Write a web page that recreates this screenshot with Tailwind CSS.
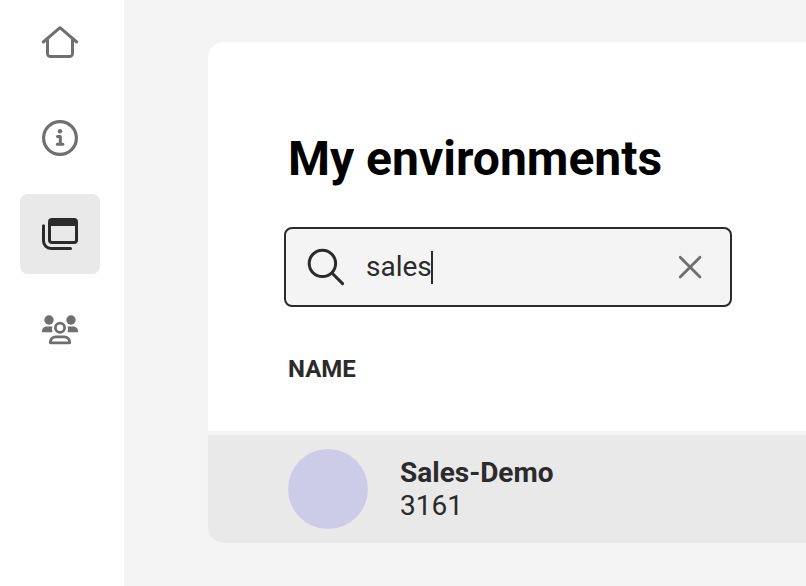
<!DOCTYPE html>
<html lang="en">
<head>
<meta charset="utf-8">
<title>My environments</title>
<script src="https://cdn.jsdelivr.net/npm/@tailwindcss/browser@4"></script>
</head>
<body class="flex h-screen w-screen overflow-hidden bg-[#f4f4f4] font-['Roboto',sans-serif] text-[#2b2b2b]">
  <nav class="flex w-[124px] shrink-0 flex-col items-start gap-4 bg-white pt-0.5 pl-5 text-[#6f6f6f]">
    <a class="flex size-20 items-center justify-center rounded-lg" aria-label="Home">
      <svg class="size-10" viewBox="0 0 40 40" fill="none" stroke="currentColor" stroke-width="3" stroke-linecap="round" stroke-linejoin="round"><path d="M3.3 20 20 5.7 36.7 20"/><path d="M7.5 17.5V31.5a3 3 0 0 0 3 3h19a3 3 0 0 0 3-3V17.5"/></svg>
    </a>
    <a class="flex size-20 items-center justify-center rounded-lg" aria-label="Information">
      <svg class="size-10" viewBox="0 0 40 40" fill="none" stroke="currentColor" stroke-width="3.2" stroke-linecap="round" stroke-linejoin="round"><circle cx="20" cy="20" r="16.4"/><circle cx="20" cy="13.2" r="2.2" fill="currentColor" stroke="none"/><path d="M17.5 18.6h2.8v7.2M17.3 26.2h5.6" stroke-width="3"/></svg>
    </a>
    <a class="flex size-20 items-center justify-center rounded-lg bg-[#e9e9e9] text-[#2b2b2b]" aria-label="Environments">
      <svg class="size-10" viewBox="0 0 40 40" fill="none" stroke="currentColor" stroke-width="3" stroke-linecap="round" stroke-linejoin="round"><rect x="9.5" y="5.4" width="27" height="23" rx="2.5"/><path d="M9.5 8.5a3 3 0 0 1 3-3h21a3 3 0 0 1 3 3V12h-27z" fill="currentColor" stroke="none"/><path d="M3.5 11.7V27a7.5 7.5 0 0 0 7.5 7.5h19.5"/></svg>
    </a>
    <a class="flex size-20 items-center justify-center rounded-lg" aria-label="People">
      <svg class="size-10" viewBox="0 0 40 40" fill="currentColor"><circle cx="9" cy="10" r="4.7"/><circle cx="31" cy="10" r="4.7"/><path d="M2 22.3v-1.2a4.7 4.7 0 0 1 4.7-4.7h5.7a8 8 0 0 0 .1 5.9zM38 22.3v-1.2a4.7 4.7 0 0 0-4.7-4.7h-5.7a8 8 0 0 1-.1 5.9z"/><circle cx="20" cy="17.8" r="4.6" fill="none" stroke="currentColor" stroke-width="2.8"/><path d="M10.3 32.8c0-3.4 2.2-6 5.5-6h8.4c3.3 0 5.5 2.6 5.5 6z" fill="none" stroke="currentColor" stroke-width="2.8" stroke-linejoin="round"/></svg>
    </a>
  </nav>
  <main class="flex-1 pt-[42px] pl-[84px]">
    <section class="overflow-hidden rounded-l-2xl bg-white">
      <div class="flex h-[389px] flex-col items-start pl-20">
        <h1 class="mt-[89px] text-[48px] leading-[56px] font-bold whitespace-nowrap text-black">My environments</h1>
        <div class="mt-10 -ml-1 flex h-20 w-[448px] items-center rounded-lg border-2 border-[#2b2b2b] bg-[#f4f4f4] pr-5 pl-5">
          <svg class="size-10 shrink-0" viewBox="0 0 40 40" fill="none" stroke="currentColor" stroke-width="3" stroke-linecap="round"><circle cx="16.4" cy="16.4" r="13.2"/><path d="m26.2 26.2 10.4 10.4"/></svg>
          <span class="ml-5 text-[28px] leading-8">sales</span><span class="-ml-px h-[33px] w-0.5 bg-[#2b2b2b]"></span>
          <svg class="ml-auto size-10 shrink-0 text-[#6f6f6f]" viewBox="0 0 40 40" fill="none" stroke="currentColor" stroke-width="2.8" stroke-linecap="round"><path d="m10.2 10.2 19.8 19.8M30 10.2 10.2 30"/></svg>
        </div>
        <div class="mt-[46px] text-2xl leading-8 font-bold">NAME</div>
      </div>
      <div class="flex h-28 items-center gap-8 border-t-4 border-[#f4f4f4] bg-[#e9e9e9] pl-20">
        <div class="size-20 rounded-full bg-[#cdcce8]"></div>
        <div class="text-[28px] leading-[33px]"><div class="font-bold">Sales-Demo</div><div>3161</div></div>
      </div>
    </section>
  </main>
</body>
</html>
